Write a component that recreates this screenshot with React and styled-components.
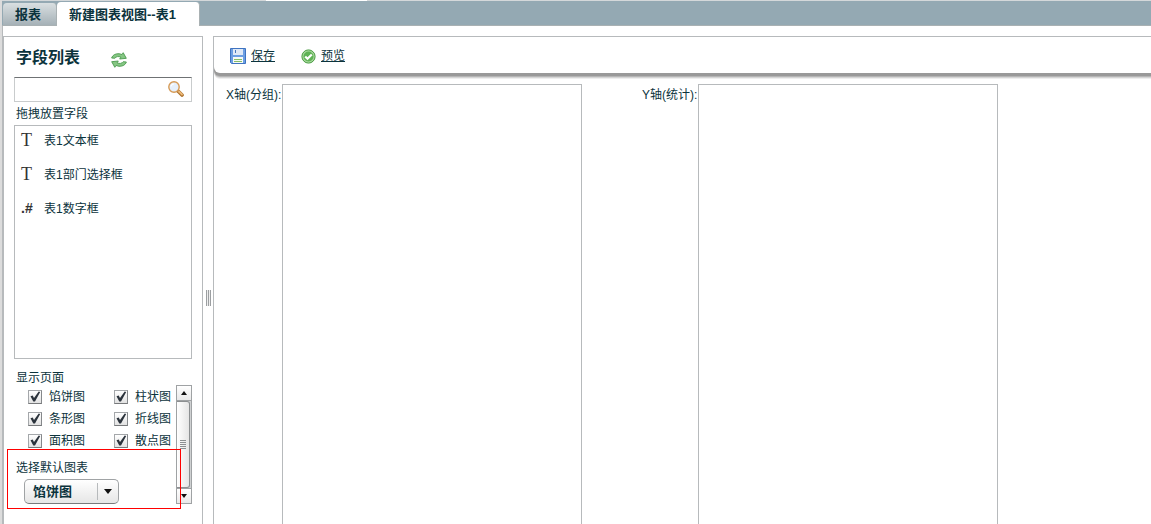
import React from "react";
import styled, { createGlobalStyle } from "styled-components";

const ink = "#0b333c";
const line = "#b7babc";

const GlobalStyle = createGlobalStyle`
  *, *::before, *::after { box-sizing: border-box; }
  body {
    margin: 0;
    background: #fff;
    color: ${ink};
    font: 12px/16px "Liberation Sans", "Noto Sans CJK SC", sans-serif;
  }
  button, input, select { font: inherit; color: inherit; margin: 0; padding: 0; }
  svg { display: block; }
`;

const Page = styled.div`
  display: flex;
  flex-direction: column;
  min-height: 100vh;
  border-left: 2px solid #dcdcdc;
  box-shadow: inset 1px 0 0 ${line};
`;

const TopEdge = styled.div`
  height: 1px;
  background: linear-gradient(90deg, #d4d8da 264px, #fff 264px, #fff 365px, #d4d8da 365px);
`;

const TabBar = styled.div`
  display: flex;
  align-items: flex-end;
  height: 25px;
  padding-left: 1px;
  background: #94a9b3;
  box-shadow: inset 0 -1px 0 #a9b1b3;
`;

const Tab = styled.button`
  height: ${(p) => (p.$active ? 24 : 23)}px;
  padding: ${(p) => (p.$active ? "2px 23px 0 12px" : "0 15px 0 12px")};
  border: 0;
  border-right: 1px solid #a9b1b3;
  border-radius: 4px 4px 0 0;
  background: ${(p) => (p.$active ? "#fff" : "linear-gradient(#d9dfe1, #a3afb5)")};
  box-shadow: ${(p) => (p.$active ? "none" : "inset 0 -1px 0 #a9b1b3")};
  font-size: 13px;
  font-weight: bold;
  white-space: nowrap;
`;

const Workspace = styled.div`
  flex: 1;
  display: grid;
  grid-template-columns: 200px 10px minmax(0, 1fr);
  padding: 10px 0 0 1px;
`;

const Sidebar = styled.aside`
  position: relative;
  padding: 0 10px;
  border: solid ${line};
  border-width: 1px 1px 0;
`;

const Heading = styled.div`
  display: flex;
  align-items: center;
  gap: 31px;
  height: 40px;
  padding: 6px 0 0 2px;
`;

const Title = styled.h2`
  margin: 0;
  font-size: 16px;
  line-height: 20px;
  padding-bottom: 4px;
`;

const IconButton = styled.button`
  border: 0;
  background: none;
  cursor: pointer;
`;

const SearchBox = styled.div`
  display: flex;
  align-items: center;
  height: 25px;
  padding: 0 7px 2px 0;
  border: 1px solid #c9cccd;
  border-top-color: #6f7274;
`;

const SearchInput = styled.input`
  flex: 1;
  min-width: 0;
  height: 20px;
  padding-left: 4px;
  border: 0;
  outline: 0;
  background: none;
`;

const Caption = styled.div`
  height: ${(p) => p.$height}px;
  padding: ${(p) => p.$top}px 0 0 2px;
`;

const FieldList = styled.ul`
  list-style: none;
  height: 234px;
  margin: 0;
  padding: 0;
  border: 1px solid ${line};
`;

const Field = styled.li`
  display: flex;
  align-items: center;
  height: 34px;
  padding: 0 0 4px 6px;
`;

const TypeMark = styled.span`
  width: 23px;
  padding-bottom: 3px;
  color: #333;
  font: ${(p) => (p.$number ? "bold 14px/16px 'Liberation Sans'" : "18px/16px 'Liberation Serif'")}, serif;
`;

const ChartOptions = styled.div`
  display: flex;
  height: 119px;
`;

const OptionBody = styled.div`
  flex: 1;
  min-width: 0;
`;

const CheckGrid = styled.div`
  display: grid;
  grid-template-columns: 86px 62px;
  grid-auto-rows: 22px;
  height: 67px;
  padding: 1px 0 0 14px;
`;

const CheckLabel = styled.label`
  display: flex;
  align-items: center;
  gap: 7px;
  white-space: nowrap;
`;

const Tick = styled.span`
  display: grid;
  & > * { grid-area: 1 / 1; }
  svg { pointer-events: none; z-index: 1; visibility: hidden; }
  input:checked + svg { visibility: visible; }
`;

const TickInput = styled.input`
  appearance: none;
  width: 14px;
  height: 14px;
  border: 1px solid;
  border-color: #a4a7aa #85888b #77797b #a4a7aa;
  background: linear-gradient(#fff, #e2e2e2);
`;

const SelectLabel = styled.label`
  display: block;
  padding: 8px 0 3px 2px;
`;

const SelectBox = styled.div`
  position: relative;
  width: 95px;
  margin-left: 10px;
`;

const Select = styled.select`
  display: block;
  appearance: none;
  width: 100%;
  height: 25px;
  padding: 0 24px 0 8px;
  border: 1px solid #a0a3a5;
  border-bottom-color: #77797b;
  border-radius: 5px;
  background: linear-gradient(#fff, #e6e6e6);
  font-size: 13px;
  font-weight: bold;
`;

const SelectArrow = styled.span`
  position: absolute;
  top: 4px;
  right: 0;
  bottom: 4px;
  width: 22px;
  display: grid;
  align-items: center;
  padding-left: 6px;
  border-left: 1px solid ${line};
  pointer-events: none;
`;

const ScrollBar = styled.div`
  display: flex;
  flex-direction: column;
  width: 16px;
`;

const ScrollButton = styled.button`
  display: grid;
  place-items: center;
  height: 16px;
  border: 1px solid #9fa2a4;
  background: linear-gradient(#fff, #e9e9e9);
`;

const ScrollTrack = styled.div`
  flex: 1;
  display: flex;
  border: solid #9fa2a4;
  border-width: 0 1px;
  background: #cfd1d2;
`;

const ScrollThumb = styled.div`
  flex: 1;
  display: grid;
  place-items: center;
  margin-right: 1px;
  border: 1px solid #8c8f91;
  border-left: 0;
  border-radius: 0 3px 3px 0;
  background: linear-gradient(90deg, #fff, #e5e5e5);
`;

const Highlight = styled.div`
  position: absolute;
  left: 3px;
  top: 412px;
  width: 174px;
  height: 60px;
  border: 1px solid #f00;
  pointer-events: none;
`;

const Splitter = styled.div`
  position: relative;
`;

const Grip = styled.span`
  position: absolute;
  left: 3px;
  top: 254px;
  width: 5px;
  height: 16px;
  background: repeating-linear-gradient(90deg, #9c9fa1 0 1px, #eee 1px 2px);
`;

const Editor = styled.main`
  display: flex;
  flex-direction: column;
  border: solid ${line};
  border-width: 1px 0 0 1px;
`;

const Toolbar = styled.div`
  display: flex;
  gap: 26px;
  height: 36px;
  padding: 2px 0 0 16px;
  background: #fff;
  border-bottom-left-radius: 6px;
  box-shadow: 0 3px 0 #999, 0 4px 0 #b5b5b5, 0 5px 0 #d5d5d5, 0 6px 0 #eee;
`;

const ToolLink = styled.a`
  display: flex;
  align-items: center;
  gap: 5px;
  color: ${ink};
  text-underline-offset: 1px;
`;

const Axes = styled.div`
  flex: 1;
  display: flex;
  gap: 60px;
  padding: 11px 12px 0 12px;
`;

const Axis = styled.section`
  display: flex;
  flex: 0 1 356px;
`;

const AxisLabel = styled.div`
  width: 56px;
  padding-top: 3px;
  white-space: nowrap;
`;

const DropZone = styled.div`
  flex: 1;
  border: 1px solid ${line};
  border-bottom: 0;
`;

const RefreshIcon = () => (
  <svg width="16" height="16" viewBox="0 0 16 16" aria-hidden="true">
    <g fill="#85c683" stroke="#4b9a4e" strokeWidth=".9" strokeLinejoin="round">
      <path d="M.6 6C1.500 3 4.500 1.500 8 1.700L11 2.500 12.200.7 15.300 6.300 8.700 7 9.900 5.200C7.500 4 5 4.500 3.800 6.300Z" />
      <path d="M15.400 10C14.500 13 11.500 14.500 8 14.300L5 13.500 3.800 15.300.7 9.700 7.300 9 6.100 10.800C8.500 12 11 11.500 12.200 9.700Z" />
    </g>
  </svg>
);

const SearchIcon = () => (
  <svg width="16" height="16" viewBox="0 0 16 16" aria-hidden="true">
    <path d="M10 10l4 4" stroke="#a96d28" strokeWidth="3.600" strokeLinecap="round" />
    <path d="M11 10.500l3 3" stroke="#edb978" strokeWidth="1.800" strokeLinecap="round" />
    <circle cx="6" cy="6" r="5.200" fill="#e6f0fb" stroke="#d69a55" strokeWidth="1.400" />
    <path d="M3 5.500C3.300 4 4.500 3 6 3" fill="none" stroke="#fff" strokeWidth="1.200" />
  </svg>
);

const SaveIcon = () => (
  <svg width="16" height="16" viewBox="0 0 16 16" aria-hidden="true">
    <path d="M.5.500h15v15h-14l-1-1z" fill="#6c9fe3" stroke="#3f73c0" />
    <path d="M3 1h10v6H3z" fill="#dfe9f6" />
    <path d="M5.500 2v3" stroke="#4776bd" />
    <path d="M3 9h10v6H3z" fill="#f7faf5" />
    <path d="M4 11.500h8M4 13.500h8" stroke="#86bd68" />
  </svg>
);

const PreviewIcon = () => (
  <svg width="15" height="15" viewBox="0 0 15 15" aria-hidden="true">
    <circle cx="7.500" cy="7.500" r="6.600" fill="#a9d99e" stroke="#4a9c43" />
    <circle cx="7.500" cy="7.500" r="5" fill="#5fb355" />
    <path d="M4.200 7.400l2.300 2.400 4.300-4.300" fill="none" stroke="#fff" strokeWidth="2.200" />
  </svg>
);

const TickIcon = () => (
  <svg width="14" height="14" viewBox="0 0 14 14" aria-hidden="true">
    <path d="M2.500 6.300l2.200-.8L6 8 10.700 1.500l1.500.6L7 11.500H5.300z" fill="#2b333c" />
  </svg>
);

const Arrow = ({ up, width = 6, height = 4 }) => (
  <svg width={width} height={height} viewBox="0 0 8 5" preserveAspectRatio="none" aria-hidden="true">
    <path d={up ? "M0 5h8L4 0z" : "M0 0h8L4 5z"} fill="#111" />
  </svg>
);

const ThumbGrip = () => (
  <svg width="6" height="9" viewBox="0 0 6 9" aria-hidden="true">
    <path d="M0 .5h6M0 2.500h6M0 4.500h6M0 6.500h6M0 8.500h6" stroke="#8c8f91" />
  </svg>
);

const fields = [
  { mark: "T", name: "表1文本框" },
  { mark: "T", name: "表1部门选择框" },
  { mark: ".#", name: "表1数字框" },
];

const charts = ["馅饼图", "柱状图", "条形图", "折线图", "面积图", "散点图"];

export default function App() {
  return (
    <>
      <GlobalStyle />
      <Page>
        <TopEdge />
        <TabBar role="tablist">
          <Tab role="tab" aria-selected="false">报表</Tab>
          <Tab role="tab" aria-selected="true" $active>新建图表视图--表1</Tab>
        </TabBar>
        <Workspace>
          <Sidebar>
            <Heading>
              <Title>字段列表</Title>
              <IconButton aria-label="刷新"><RefreshIcon /></IconButton>
            </Heading>
            <SearchBox>
              <SearchInput type="text" aria-label="搜索字段" />
              <IconButton aria-label="搜索"><SearchIcon /></IconButton>
            </SearchBox>
            <Caption $height={23} $top={4}>拖拽放置字段</Caption>
            <FieldList>
              {fields.map((f) => (
                <Field key={f.name}>
                  <TypeMark $number={f.mark !== "T"}>{f.mark}</TypeMark>
                  {f.name}
                </Field>
              ))}
            </FieldList>
            <Caption $height={26} $top={11}>显示页面</Caption>
            <ChartOptions>
              <OptionBody>
                <CheckGrid>
                  {charts.map((c) => (
                    <CheckLabel key={c}>
                      <Tick>
                        <TickInput type="checkbox" defaultChecked />
                        <TickIcon />
                      </Tick>
                      {c}
                    </CheckLabel>
                  ))}
                </CheckGrid>
                <SelectLabel htmlFor="default-chart">选择默认图表</SelectLabel>
                <SelectBox>
                  <Select id="default-chart" defaultValue="馅饼图">
                    {charts.map((c) => <option key={c}>{c}</option>)}
                  </Select>
                  <SelectArrow><Arrow width={8} height={5} /></SelectArrow>
                </SelectBox>
              </OptionBody>
              <ScrollBar>
                <ScrollButton aria-label="向上滚动"><Arrow up /></ScrollButton>
                <ScrollTrack><ScrollThumb><ThumbGrip /></ScrollThumb></ScrollTrack>
                <ScrollButton aria-label="向下滚动"><Arrow /></ScrollButton>
              </ScrollBar>
            </ChartOptions>
            <Highlight />
          </Sidebar>
          <Splitter><Grip /></Splitter>
          <Editor>
            <Toolbar>
              <ToolLink href="#save"><SaveIcon />保存</ToolLink>
              <ToolLink href="#preview"><PreviewIcon />预览</ToolLink>
            </Toolbar>
            <Axes>
              <Axis>
                <AxisLabel>X轴(分组):</AxisLabel>
                <DropZone />
              </Axis>
              <Axis>
                <AxisLabel>Y轴(统计):</AxisLabel>
                <DropZone />
              </Axis>
            </Axes>
          </Editor>
        </Workspace>
      </Page>
    </>
  );
}
